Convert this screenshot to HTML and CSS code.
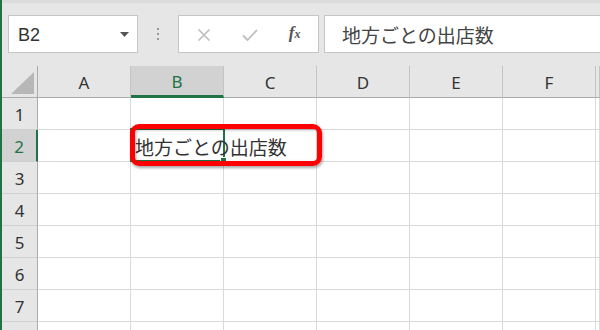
FILE: index.html
```html
<!DOCTYPE html>
<html lang="ja">

<head>
    <meta charset="UTF-8">
    <meta name="viewport" content="width=device-width, initial-scale=1.0">
    <title>地方ごとの出店数</title>
    <link rel="stylesheet" href="styles.css">
</head>

<body>
    <div class="window">
        <!-- 名前ボックスと数式バー -->
        <div class="toolbar">
            <div class="name-box">
                <span>B2</span>
                <svg class="caret" width="9" height="5" viewBox="0 0 9 5"><path d="M0 0h9L4.5 5z" fill="#555"/></svg>
            </div>
            <div class="grip"><span></span><span></span><span></span></div>
            <div class="fx-buttons">
                <svg width="14" height="12" viewBox="0 0 14 12"><path d="M1.5 0.5l11 11M12.5 0.5l-11 11" stroke="#bdbdbd" stroke-width="1.6" fill="none"/></svg>
                <svg width="16" height="12" viewBox="0 0 16 12"><path d="M1 6.5l4.5 4.5L15 1" stroke="#bdbdbd" stroke-width="1.8" fill="none"/></svg>
                <span class="fx"><i>f</i><small>x</small></span>
            </div>
            <div class="formula-input">地方ごとの出店数</div>
        </div>

        <!-- シート -->
        <div class="sheet">
            <div class="hd corner">
                <svg width="23" height="22" viewBox="0 0 23 22"><path d="M23 0v22H0z" fill="#b7b7b7"/></svg>
            </div>
            <div class="hd col">A</div>
            <div class="hd col active">B</div>
            <div class="hd col">C</div>
            <div class="hd col">D</div>
            <div class="hd col">E</div>
            <div class="hd col">F</div>
            <div class="hd col"></div>

            <div class="hd row">1</div>
            <div class="cell"></div><div class="cell"></div><div class="cell"></div><div class="cell"></div><div class="cell"></div><div class="cell"></div><div class="cell"></div>

            <div class="hd row active">2</div>
            <div class="cell"></div>
            <div class="cell selected"><span class="value">地方ごとの出店数</span><span class="handle"></span></div>
            <div class="cell"></div><div class="cell"></div><div class="cell"></div><div class="cell"></div><div class="cell"></div>

            <div class="hd row">3</div>
            <div class="cell"></div><div class="cell"></div><div class="cell"></div><div class="cell"></div><div class="cell"></div><div class="cell"></div><div class="cell"></div>

            <div class="hd row">4</div>
            <div class="cell"></div><div class="cell"></div><div class="cell"></div><div class="cell"></div><div class="cell"></div><div class="cell"></div><div class="cell"></div>

            <div class="hd row">5</div>
            <div class="cell"></div><div class="cell"></div><div class="cell"></div><div class="cell"></div><div class="cell"></div><div class="cell"></div><div class="cell"></div>

            <div class="hd row">6</div>
            <div class="cell"></div><div class="cell"></div><div class="cell"></div><div class="cell"></div><div class="cell"></div><div class="cell"></div><div class="cell"></div>

            <div class="hd row">7</div>
            <div class="cell"></div><div class="cell"></div><div class="cell"></div><div class="cell"></div><div class="cell"></div><div class="cell"></div><div class="cell"></div>

            <!-- 8行目は画面下で切れている -->
            <div class="hd row"></div>
            <div class="cell"></div><div class="cell"></div><div class="cell"></div><div class="cell"></div><div class="cell"></div><div class="cell"></div><div class="cell"></div>

            <!-- 赤い囲み -->
            <div class="annotation"></div>
        </div>
    </div>
</body>

</html>
```

FILE: styles.css
```css
body {
    margin: 0;
    font-family: "Noto Sans", "Noto Sans CJK JP", sans-serif;
    color: #333;
}

.window {
    height: 330px;
    overflow: hidden;
    border-left: 2px solid #217346;
    background-color: #e6e6e6;
}

.toolbar {
    display: flex;
    align-items: flex-start;
    height: 66px;
    padding-top: 12px;
    box-sizing: border-box;
    border-top: 3px solid #dcdcdc;
}

.name-box,
.fx-buttons,
.formula-input {
    height: 38px;
    box-sizing: border-box;
    background-color: white;
    border: 1px solid #c6c6c6;
    display: flex;
    align-items: center;
}

.name-box {
    width: 130px;
    margin-left: 6px;
    padding: 0 8px 0 9px;
    font-family: "Liberation Sans", sans-serif;
    font-size: 18px;
    color: #333;
    justify-content: space-between;
}

.name-box span {
    padding-top: 3px;
}

.grip {
    width: 40px;
    height: 38px;
    display: flex;
    flex-direction: column;
    align-items: center;
    justify-content: center;
    gap: 3px;
}

.grip span {
    width: 2px;
    height: 2px;
    background-color: #999;
}

.fx-buttons {
    width: 141px;
    justify-content: space-around;
    padding: 0 2px;
}

.fx-buttons svg {
    margin-top: 2px;
}

.fx {
    font-family: "Liberation Serif", serif;
    font-weight: bold;
    color: #555;
    font-size: 17px;
    margin-top: -3px;
}

.fx small {
    font-size: 12px;
    font-style: italic;
}

.formula-input {
    flex: 1;
    margin-left: 5px;
    margin-right: -6px;
    padding-left: 17px;
    font-family: "Noto Sans CJK JP", sans-serif;
    font-size: 19px;
    color: #444;
}

.sheet {
    position: relative;
    display: grid;
    grid-template-columns: 36px repeat(6, 93px) 1fr;
    grid-auto-rows: 32px;
    background-color: white;
}

.hd {
    background-color: #e6e6e6;
    box-sizing: border-box;
    display: flex;
    align-items: center;
    justify-content: center;
    font-size: 17px;
    color: #333;
}

.corner {
    border-right: 1px solid #ababab;
    border-bottom: 1px solid #ababab;
    justify-content: flex-end;
    align-items: flex-end;
    padding: 0 3px 3px 0;
}

.col {
    border-right: 1px solid #c4c4c4;
    border-bottom: 1px solid #ababab;
    padding-top: 2px;
}

.row {
    border-right: 1px solid #ababab;
    border-bottom: 1px solid #cfcfcf;
    padding-top: 1px;
}

.hd.active {
    background-color: #d2d2d2;
    color: #217346;
}

.col.active {
    border-bottom: 3px solid #217346;
}

.row.active {
    border-right: 2px solid #217346;
}

.cell {
    box-sizing: border-box;
    border-right: 1px solid #dadada;
    border-bottom: 1px solid #dadada;
}

.selected {
    position: relative;
    display: flex;
    align-items: center;
    white-space: nowrap;
}

.selected::after {
    content: "";
    position: absolute;
    left: -1px;
    top: -2px;
    right: -2px;
    bottom: -1px;
    border: 2px solid #217346;
}

.value {
    padding-left: 4px;
    padding-top: 1px;
    font-family: "Noto Sans CJK JP", sans-serif;
    font-size: 19px;
    color: #333;
    position: relative;
    z-index: 1;
}

.handle {
    position: absolute;
    right: -4px;
    bottom: -3px;
    width: 5px;
    height: 5px;
    background-color: #217346;
    border: 1px solid white;
    z-index: 2;
}

.annotation {
    position: absolute;
    left: 128px;
    top: 58px;
    width: 192px;
    height: 42px;
    box-sizing: border-box;
    border: 5px solid #f00;
    border-radius: 9px;
    box-shadow: 1px 2px 3px rgba(0, 0, 0, 0.35), inset 1px 1px 3px rgba(0, 0, 0, 0.3);
    z-index: 3;
}
```
